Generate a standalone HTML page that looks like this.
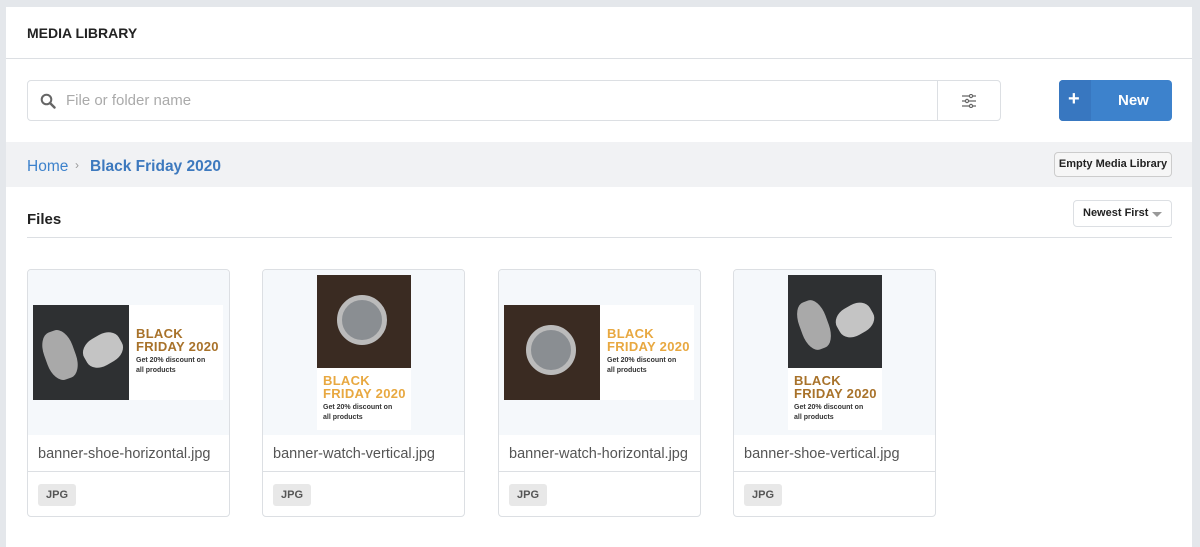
<!DOCTYPE html>
<html><head><style>
*{box-sizing:border-box;margin:0;padding:0}
body{width:1200px;height:536px;overflow:hidden;background:#e4e7eb;font-family:"Liberation Sans",sans-serif;position:relative}
.panel{position:absolute;left:6px;top:7px;width:1186px;height:540px;background:#fff}
.abs{position:absolute}
.title{left:21px;top:18px;font-size:14px;font-weight:bold;color:#222}
.hline{left:0;top:51px;width:1186px;height:1px;background:#dcdfe3}
.search{left:21px;top:73px;width:974px;height:41px;border:1px solid #dcdfe3;border-radius:4px}
.search .ph{left:38px;top:11px;font-size:15px;color:#aaa}
.search .div{left:909px;top:0;width:1px;height:39px;background:#dcdfe3}
.new{left:1053px;top:73px;width:113px;height:41px;background:#3d82cc;border-radius:4px;color:#fff}
.crumb{left:0;top:135px;width:1186px;height:45px;background:#f1f2f4}
.files{left:21px;top:204px;font-size:15px;font-weight:bold;color:#222}
.fline{left:21px;top:230px;width:1145px;height:1px;background:#dcdfe3}
.card{position:absolute;top:269px;width:203px;height:248px;border:1px solid #dcdfe3;border-radius:4px;overflow:hidden;background:#fff}
.card .img{position:absolute;left:0;top:0;width:201px;height:165px;background:#f5f8fb}
.card .name{position:absolute;left:10px;top:176px;font-size:14.5px;color:#555}
.card .sep{position:absolute;left:0;top:201px;width:201px;height:1px;background:#dcdfe3}
.card .tag{position:absolute;left:10px;top:214px;width:38px;height:22px;background:#e8e8e8;border-radius:3px;font-size:11px;font-weight:bold;color:#555;text-align:center;line-height:22px}
.bt{font-weight:bold;font-size:13px;line-height:12.5px;letter-spacing:.3px}
.bs{font-size:7px;font-weight:bold;color:#333;line-height:10px;margin-top:3px}
</style></head><body>
<div class="panel">
<div class="abs title">MEDIA LIBRARY</div>
<div class="abs hline"></div>
<div class="abs search">
<svg class="abs" style="left:12px;top:12px" width="16" height="16" viewBox="0 0 16 16"><circle cx="6.5" cy="6.5" r="4.8" fill="none" stroke="#666" stroke-width="2"/><path d="M10 10l4.5 4.5" stroke="#666" stroke-width="2.4" stroke-linecap="round"/></svg>
<div class="abs ph">File or folder name</div>
<div class="abs div"></div>
<svg class="abs" style="left:933px;top:13px" width="16" height="14" viewBox="0 0 16 14"><g stroke="#666" stroke-width="1.2" fill="#fff"><path d="M1 2h14M1 7h14M1 12h14"/><circle cx="10" cy="2" r="1.6"/><circle cx="6" cy="7" r="1.6"/><circle cx="10" cy="12" r="1.6"/></g></svg>
</div>
<div class="abs new"><div class="abs" style="left:0;top:0;width:32px;height:41px;background:#3877c0;border-radius:4px 0 0 4px"></div><div class="abs" style="left:9px;top:8px;font-size:20px;font-weight:bold">+</div><div class="abs" style="left:59px;top:12px;font-size:15px;font-weight:bold">New</div></div>
<div class="abs crumb">
<div class="abs" style="left:21px;top:16px;font-size:15.5px;color:#3d82cc">Home</div>
<div class="abs" style="left:69px;top:16px;font-size:12px;color:#999">›</div>
<div class="abs" style="left:84px;top:16px;font-size:15.5px;font-weight:bold;color:#3d79be">Black Friday 2020</div>
<div class="abs" style="left:1048px;top:10px;width:118px;height:25px;border:1px solid #ccc;border-radius:4px;background:#f6f6f6;font-size:11px;font-weight:bold;color:#222;text-align:center;line-height:23px">Empty Media Library</div>
</div>
<div class="abs files">Files</div>
<div class="abs" style="left:1067px;top:193px;width:99px;height:27px;border:1px solid #dcdfe3;border-radius:4px;font-size:11px;font-weight:bold;color:#222;line-height:25px;padding-left:9px">Newest First<span style="position:absolute;right:9px;top:11px;border-left:5px solid transparent;border-right:5px solid transparent;border-top:5px solid #999"></span></div>
<div class="abs fline"></div>
</div>

<div class="card" style="left:27px"><div class="img">
<div class="abs" style="left:5px;top:35px;width:190px;height:95px;background:#fff"></div>
<div class="abs" style="left:5px;top:35px;width:96px;height:95px;background:#2e3032"><div class="abs" style="left:12px;top:25px;width:30px;height:50px;background:#a9a9a9;border-radius:40%;transform:rotate(-20deg)"></div><div class="abs" style="left:50px;top:30px;width:40px;height:30px;background:#c4c4c4;border-radius:40%;transform:rotate(-30deg)"></div></div>
<div class="abs" style="left:108px;top:58px;color:#a8722a" ><div class="bt">BLACK<br>FRIDAY 2020</div><div class="bs">Get 20% discount on<br>all products</div></div>
</div><div class="name">banner-shoe-horizontal.jpg</div><div class="sep"></div><div class="tag">JPG</div></div>

<div class="card" style="left:262px"><div class="img">
<div class="abs" style="left:54px;top:5px;width:94px;height:155px;background:#fff"></div>
<div class="abs" style="left:54px;top:5px;width:94px;height:93px;background:#3a2b22"><div class="abs" style="left:20px;top:20px;width:50px;height:50px;background:#8a8e92;border-radius:50%;border:5px solid #bbb"></div></div>
<div class="abs" style="left:60px;top:105px;color:#e8a840"><div class="bt">BLACK<br>FRIDAY 2020</div><div class="bs">Get 20% discount on<br>all products</div></div>
</div><div class="name">banner-watch-vertical.jpg</div><div class="sep"></div><div class="tag">JPG</div></div>

<div class="card" style="left:498px"><div class="img">
<div class="abs" style="left:5px;top:35px;width:190px;height:95px;background:#fff"></div>
<div class="abs" style="left:5px;top:35px;width:96px;height:95px;background:#3a2b22"><div class="abs" style="left:22px;top:20px;width:50px;height:50px;background:#8a8e92;border-radius:50%;border:5px solid #bbb"></div></div>
<div class="abs" style="left:108px;top:58px;color:#e8a840"><div class="bt">BLACK<br>FRIDAY 2020</div><div class="bs">Get 20% discount on<br>all products</div></div>
</div><div class="name">banner-watch-horizontal.jpg</div><div class="sep"></div><div class="tag">JPG</div></div>

<div class="card" style="left:733px"><div class="img">
<div class="abs" style="left:54px;top:5px;width:94px;height:155px;background:#fff"></div>
<div class="abs" style="left:54px;top:5px;width:94px;height:93px;background:#2e3032"><div class="abs" style="left:12px;top:25px;width:28px;height:50px;background:#a9a9a9;border-radius:40%;transform:rotate(-20deg)"></div><div class="abs" style="left:48px;top:30px;width:38px;height:30px;background:#c4c4c4;border-radius:40%;transform:rotate(-30deg)"></div></div>
<div class="abs" style="left:60px;top:105px;color:#a8722a"><div class="bt">BLACK<br>FRIDAY 2020</div><div class="bs">Get 20% discount on<br>all products</div></div>
</div><div class="name">banner-shoe-vertical.jpg</div><div class="sep"></div><div class="tag">JPG</div></div>
</body></html>
